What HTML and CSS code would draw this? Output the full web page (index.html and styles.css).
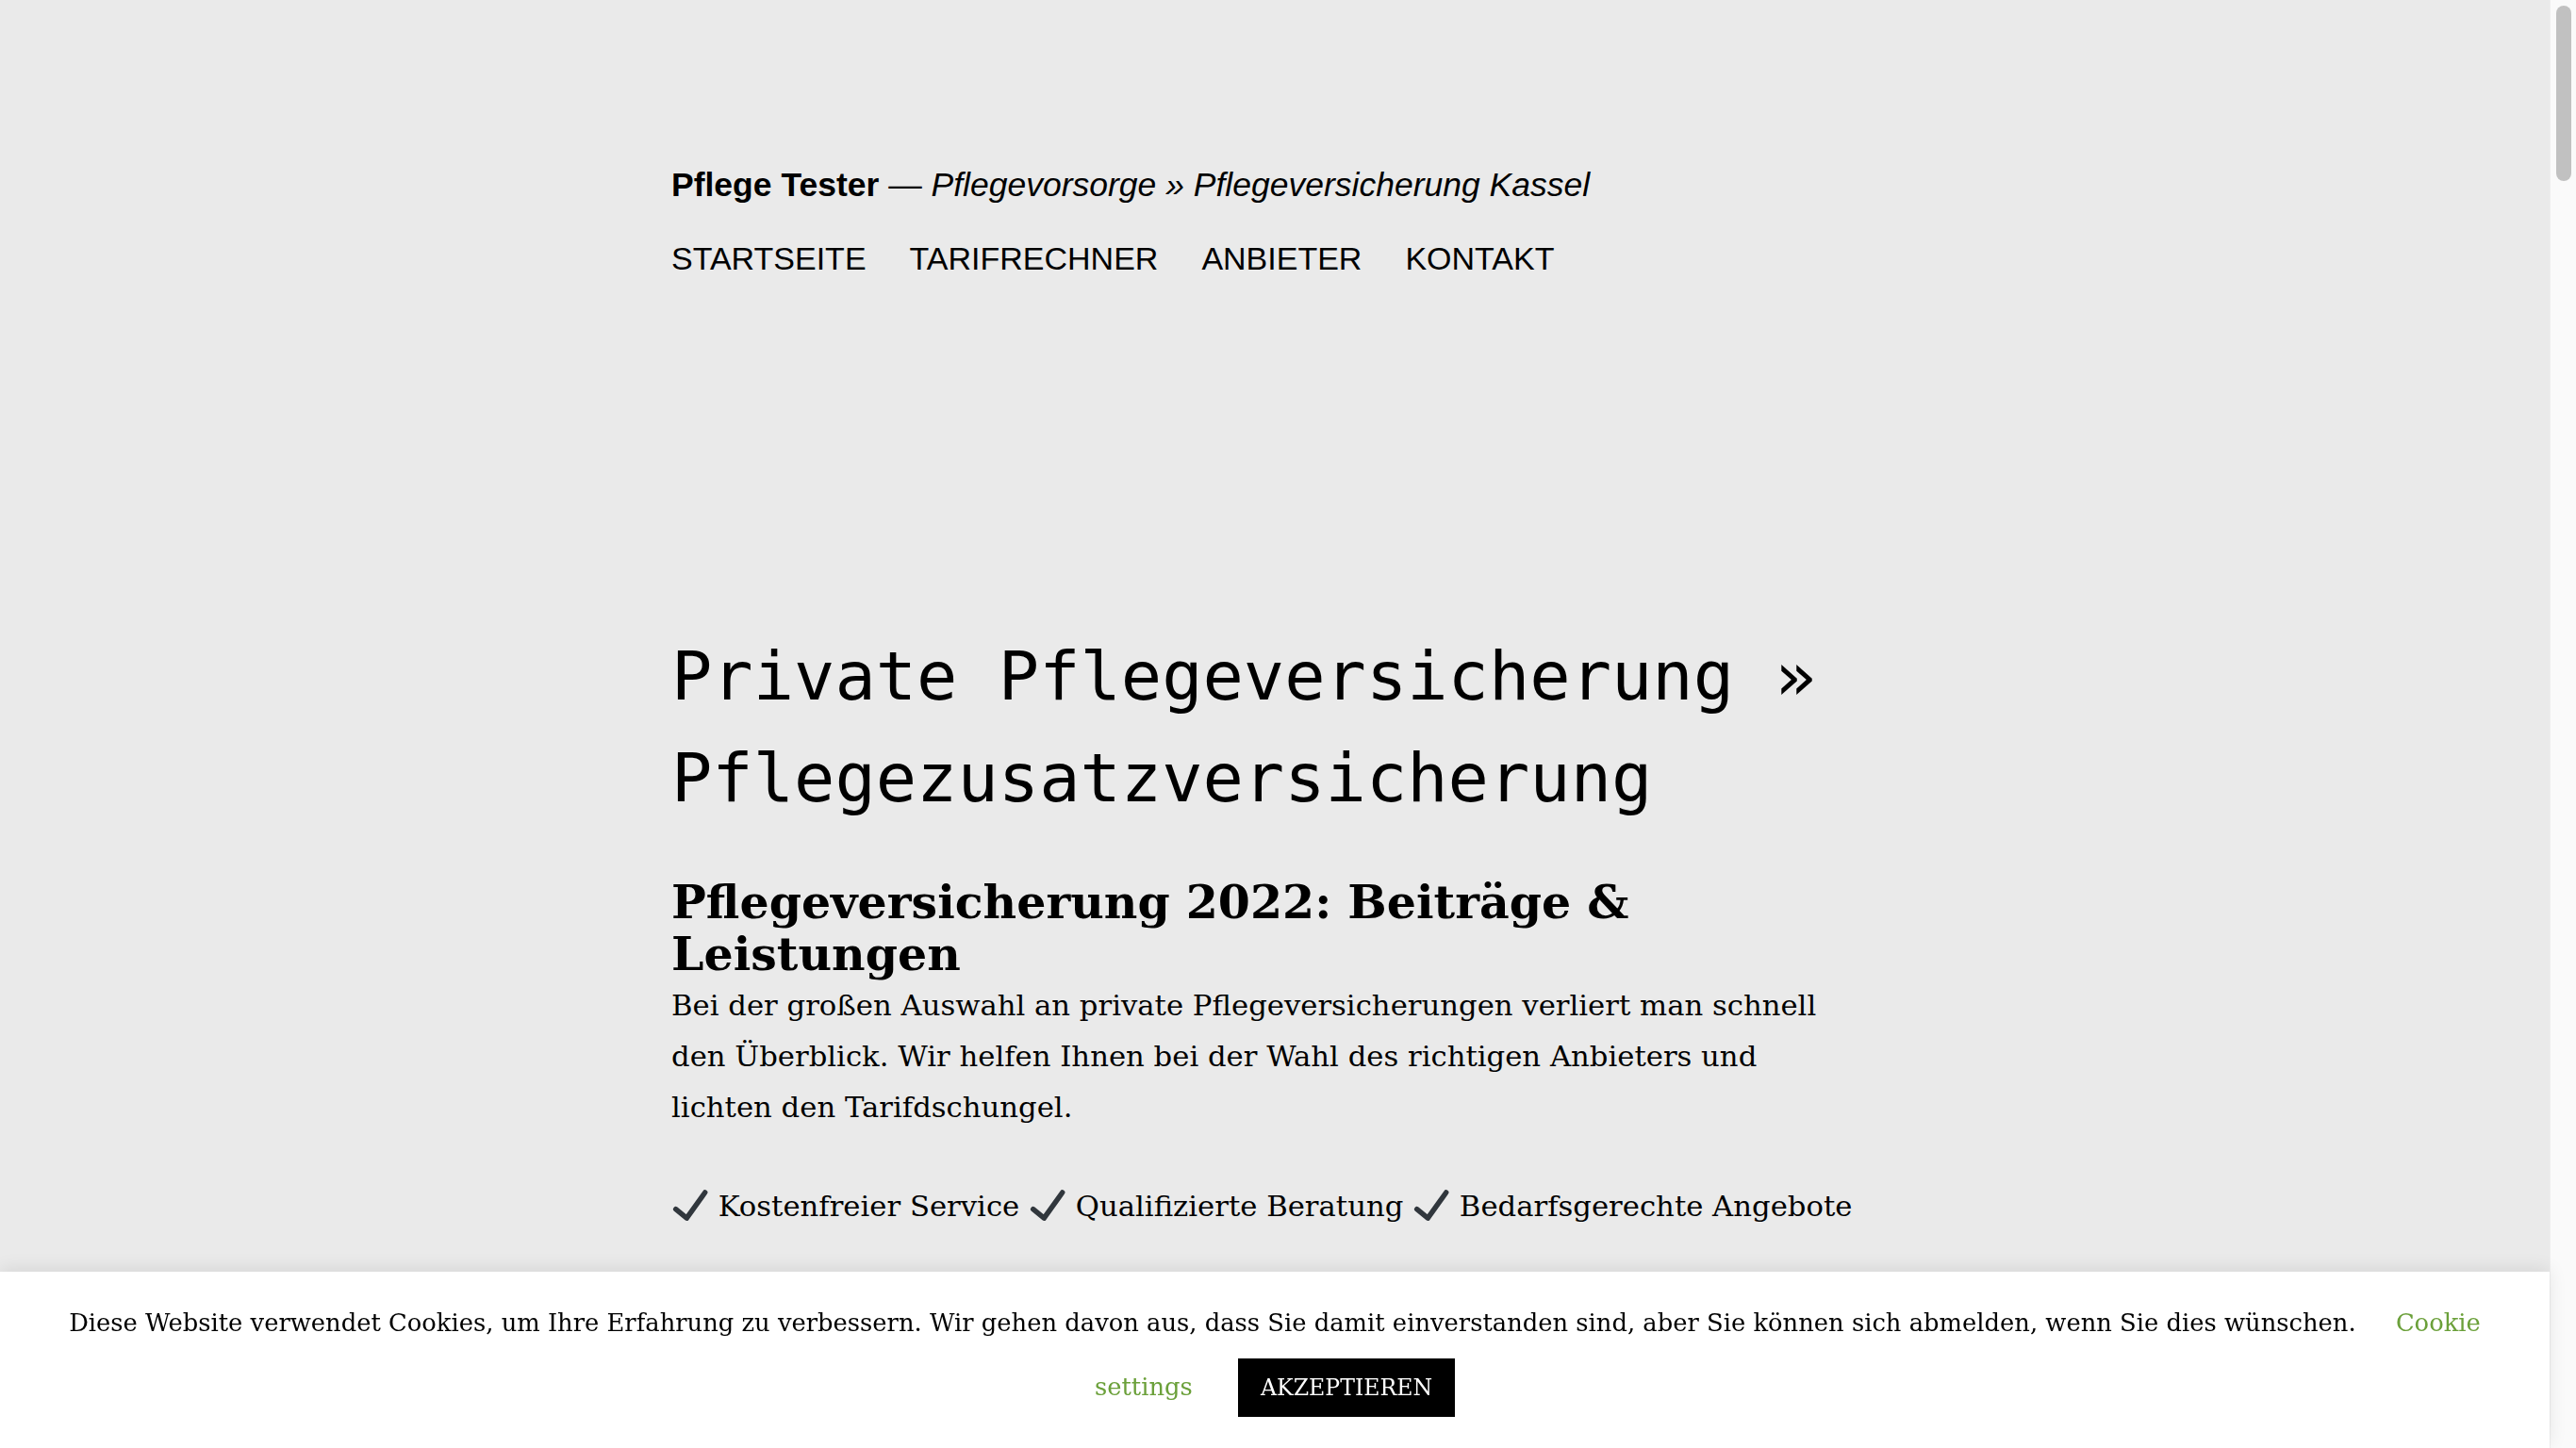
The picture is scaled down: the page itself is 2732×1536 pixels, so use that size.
FILE: index.html
```html
<!DOCTYPE html>
<html lang="de">
<head>
<meta charset="utf-8">
<title>Pflege Tester — Private Pflegeversicherung</title>
<link rel="stylesheet" href="styles.css">
</head>
<body>
<div class="viewport">
  <div class="page">
    <header class="site-header">
      <p class="site-title"><strong>Pflege Tester</strong> — <em>Pflegevorsorge » Pflegeversicherung Kassel</em></p>
      <nav class="main-nav">
        <a href="#">Startseite</a>
        <a href="#">Tarifrechner</a>
        <a href="#">Anbieter</a>
        <a href="#">Kontakt</a>
      </nav>
    </header>
    <main class="content">
      <h1 class="page-title">Private Pflegeversicherung » Pflegezusatzversicherung</h1>
      <h2 class="section-title">Pflegeversicherung 2022: Beiträge &amp; Leistungen</h2>
      <p class="lead">Bei der großen Auswahl an private Pflegeversicherungen verliert man schnell den Überblick. Wir helfen Ihnen bei der Wahl des richtigen Anbieters und lichten den Tarifdschungel.</p>
      <p class="usp"><svg class="check" viewBox="0 0 40 40" aria-hidden="true"><polyline points="4.7,24.7 16.3,34.2 35.7,7" /></svg> Kostenfreier Service <svg class="check" viewBox="0 0 40 40" aria-hidden="true"><polyline points="4.7,24.7 16.3,34.2 35.7,7" /></svg> Qualifizierte Beratung <svg class="check" viewBox="0 0 40 40" aria-hidden="true"><polyline points="4.7,24.7 16.3,34.2 35.7,7" /></svg> Bedarfsgerechte Angebote</p>
    </main>
  </div>
  <div class="scrollbar"><div class="scrollbar-thumb"></div></div>
</div>
<div class="cookie-bar">
  <p class="cookie-text">Diese Website verwendet Cookies, um Ihre Erfahrung zu verbessern. Wir gehen davon aus, dass Sie damit einverstanden sind, aber Sie können sich abmelden, wenn Sie dies wünschen. <a class="cookie-link" href="#">Cookie settings</a> <a class="cookie-accept" href="#">AKZEPTIEREN</a></p>
</div>
</body>
</html>
```

FILE: styles.css
```css
html, body {
  margin: 0;
  padding: 0;
  height: 100%;
  overflow: hidden;
}

body {
  background: #eaeaea;
  color: #000;
  font-family: "DejaVu Serif", "Liberation Serif", serif;
}

.viewport {
  display: flex;
  height: 100vh;
}

.page {
  flex: 1;
  min-width: 0;
}

.site-header,
.content {
  max-width: 1280px;
  margin: 0 auto;
}

.site-header {
  padding-top: 172px;
}

.site-title {
  margin: 0;
  font-family: "Liberation Sans", Arial, sans-serif;
  font-size: 35.5px;
  line-height: 48px;
  color: #000;
}

.site-title strong {
  font-weight: 700;
}

.site-title em {
  font-style: italic;
}

.main-nav {
  display: flex;
  gap: 46px;
  margin-top: 30px;
  font-family: "Liberation Sans", Arial, sans-serif;
  font-size: 34px;
  line-height: 48px;
}

.main-nav a {
  color: #000;
  text-decoration: none;
  text-transform: uppercase;
}

.content {
  padding-top: 365px;
}

.page-title {
  margin: 0;
  font-family: "DejaVu Sans Mono", "Liberation Mono", monospace;
  font-weight: 400;
  font-size: 72px;
  line-height: 108px;
}

.section-title {
  margin: 51px 0 0;
  font-family: "DejaVu Serif", "Liberation Serif", serif;
  font-weight: 700;
  font-size: 49px;
  line-height: 55px;
}

.lead,
.usp {
  margin: 0;
  font-size: 30.7px;
  line-height: 54px;
}

.lead {
  max-width: 1255px;
}

.usp {
  margin-top: 51px;
}

.check {
  width: 40px;
  height: 40px;
  vertical-align: -8px;
}

.check polyline {
  fill: none;
  stroke: #31373d;
  stroke-width: 5.5;
  stroke-linecap: round;
  stroke-linejoin: round;
}

.scrollbar {
  flex: 0 0 28px;
  display: flex;
  flex-direction: column;
  align-items: center;
  padding-top: 6px;
  box-sizing: border-box;
  background: #fafafa;
  border-left: 1px solid #efefef;
}

.scrollbar-thumb {
  width: 16px;
  height: 186px;
  border-radius: 8px;
  background: #c1c1c1;
}

.cookie-bar {
  position: fixed;
  left: 0;
  right: 28px;
  bottom: 0;
  height: 187px;
  box-sizing: border-box;
  padding: 20px 40px 0;
  background: #fff;
  box-shadow: 0 -3px 18px rgba(0, 0, 0, 0.09);
}

.cookie-text {
  margin: 0;
  text-align: center;
  font-family: "DejaVu Serif", "Liberation Serif", serif;
  font-size: 25.8px;
  line-height: 68px;
  color: #000;
}

.cookie-link {
  margin-left: 34px;
  color: #6ba03a;
  text-decoration: none;
}

.cookie-accept {
  display: inline-block;
  margin-left: 40px;
  padding: 0 24px;
  height: 62px;
  line-height: 62px;
  background: #000;
  color: #fff;
  font-size: 23.6px;
  text-decoration: none;
}
```
